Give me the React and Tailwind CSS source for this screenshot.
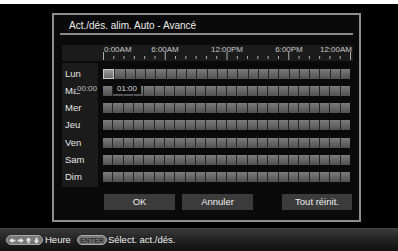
import React from "react";

const days = ["Lun", "Mar", "Mer", "Jeu", "Ven", "Sam", "Dim"];

function Bar({ highlightFirst }) {
  return (
    <div className="w-[247px] h-[10px] flex gap-[1px] bg-[#262626]">
      {Array.from({ length: 24 }).map((_, i) =>
        highlightFirst && i === 0 ? (
          <div
            key={i}
            className="flex-1 border border-[#c8c8c8] bg-gradient-to-b from-[#9a9a9a] to-[#6a6a6a]"
          />
        ) : (
          <div
            key={i}
            className="flex-1 bg-gradient-to-b from-[#7c7c7c] via-[#666666] to-[#505050]"
          />
        )
      )}
    </div>
  );
}

function Ticks() {
  const w = 247;
  return (
    <svg width="250" height="9" viewBox="0 0 250 9" className="block">
      {Array.from({ length: 25 }).map((_, i) => {
        const x = Math.min(i * (w / 24) + 0.5, 248.5);
        const major = i % 6 === 0;
        return (
          <line
            key={i}
            x1={x}
            x2={x}
            y1={major ? 0 : 4}
            y2={major ? 8 : 7}
            stroke="#b0b0b0"
            strokeWidth="1"
          />
        );
      })}
    </svg>
  );
}

function Arrow({ dir }) {
  const rot = { left: 180, right: 0, up: -90, down: 90 }[dir];
  return (
    <svg width="7" height="7" viewBox="0 0 10 10" style={{ transform: `rotate(${rot}deg)` }}>
      <path d="M1 3.5 H5 V1 L9.5 5 L5 9 V6.5 H1 Z" fill="#e6e6e6" />
    </svg>
  );
}

export default function App() {
  return (
    <div className="w-[398px] h-[251px] bg-black flex flex-col overflow-hidden font-['Liberation_Sans',Arial,sans-serif]">
      <div className="h-[4px] bg-white shrink-0" />
      <div className="flex-1 pl-[52px] pt-[9px]">
        <div className="relative w-[309px] h-[209px] border-2 border-[#8e8e8e] bg-[#0a0a0a] flex flex-col">
          <div className="h-[18px] pl-[15px] pt-[6px] text-[10px] leading-none text-[#ececec] whitespace-nowrap">
            Act./dés. alim. Auto - Avancé
          </div>
          <div className="mx-[6px] h-[2px] bg-[#8a8a8a]" />

          {/* time header */}
          <div className="mt-[10px] ml-[8px] mr-[6px] h-[16px] bg-[#1b1b1b] pl-[41px]">
            <div className="relative w-[247px] h-[16px] text-[8px] leading-none text-[#c8c8c8] whitespace-nowrap">
              <span className="absolute left-[1px] top-[1px]">0:00AM</span>
              <span className="absolute left-[62px] top-[1px] -translate-x-1/2">6:00AM</span>
              <span className="absolute left-[124px] top-[1px] -translate-x-1/2">12:00PM</span>
              <span className="absolute left-[186px] top-[1px] -translate-x-1/2">6:00PM</span>
              <span className="absolute right-[-2px] top-[1px]">12:00AM</span>
              <div className="absolute left-0 top-[7px]">
                <Ticks />
              </div>
            </div>
          </div>

          {/* rows */}
          <div className="mt-[2px] ml-[8px] flex">
            <div className="w-[36px] bg-[#1b1b1b] pt-[2px] pb-[1px]">
              {days.map((d) => (
                <div key={d} className="h-[17.25px] flex items-center pl-[3px] text-[9.5px] text-[#e6e6e6]">
                  {d}
                </div>
              ))}
            </div>
            <div className="ml-[5px] pt-[2px]">
              {days.map((d, i) => (
                <div key={d} className="h-[17.25px] flex items-center">
                  <Bar highlightFirst={i === 0} />
                </div>
              ))}
            </div>
          </div>

          {/* buttons */}
          <div className="mt-[7px] ml-[50px] flex text-[9.5px] text-[#eeeeee]">
            <div className="w-[71px] h-[16px] bg-[#3b3b3b] flex items-center justify-center">OK</div>
            <div className="ml-[7px] w-[71px] h-[16px] bg-[#3b3b3b] flex items-center justify-center">Annuler</div>
            <div className="ml-[29px] w-[70px] h-[16px] bg-[#3b3b3b] flex items-center justify-center">Tout réinit.</div>
          </div>

          {/* range tooltip over Mar row */}
          <div className="absolute left-[22px] top-[69px] h-[9px] px-[1px] bg-[#1b1b1b] text-[8px] leading-[9px] text-[#bdbdbd]">
            00:00
          </div>
          <div className="absolute left-[59px] top-[68px] w-[28px] h-[11px] bg-[#0c0c0c] flex items-center justify-center text-[8px] text-[#d8d8d8]">
            01:00
          </div>
        </div>
      </div>
      <div className="h-[23px] shrink-0 bg-gradient-to-b from-[#3a3a3a] via-[#222222] to-[#111111] border-t border-[#444] flex items-center pl-[6px] text-[9.5px] text-[#f0f0f0] whitespace-nowrap">
        <div className="h-[10px] w-[37px] rounded-full bg-[#777777] border border-[#a8a8a8] flex items-center justify-center gap-[1px]">
          <Arrow dir="left" />
          <Arrow dir="right" />
          <Arrow dir="up" />
          <Arrow dir="down" />
        </div>
        <span className="ml-[2px]">Heure</span>
        <div className="ml-[6px] h-[10px] w-[30px] rounded-full bg-[#777777] border border-[#a8a8a8] flex items-center justify-center text-[7px] leading-none text-[#2e2e2e] font-bold">
          ENTER
        </div>
        <span className="ml-[1px]">Sélect. act./dés.</span>
      </div>
    </div>
  );
}
